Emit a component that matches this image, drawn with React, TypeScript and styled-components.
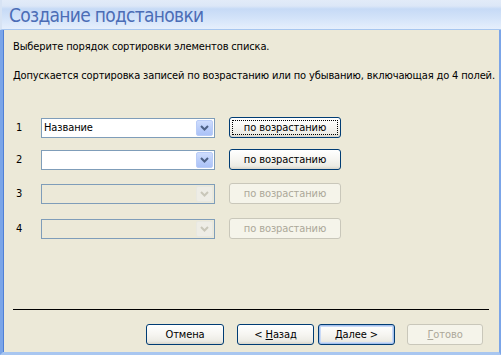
import React from "react";
import styled, { createGlobalStyle } from "styled-components";

const Global = createGlobalStyle`
  html, body { margin: 0; padding: 0; background: #ECE9D8; }
  body { font-family: "DejaVu Sans Condensed", "DejaVu Sans", sans-serif; }
`;

const Window = styled.div`
  width: 501px;
  height: 355px;
  display: flex;
  flex-direction: column;
  overflow: hidden;
  box-sizing: border-box;
`;

const Header = styled.div`
  height: 30px;
  flex: none;
  box-sizing: border-box;
  background: linear-gradient(to bottom, #E2EBF8 0px, #DCE7F7 6px, #C6DAF6 9px, #D3E3F9 18px, #E6EFFC 29px);
  border-bottom: 1px solid #A7C6EF;
  border-left: 2px solid #D7E3F4;
  display: flex;
  align-items: center;
  padding-left: 7px;
`;

const Title = styled.div`
  font-family: "DejaVu Sans Condensed", "DejaVu Sans", sans-serif;
  font-size: 19px;
  color: #4B6DB6;
  line-height: 24px;
  margin-top: 1px;
  letter-spacing: -0.7px;
`;

const Body = styled.div`
  flex: 1;
  display: flex;
  flex-direction: column;
  background: #ECE9D8;
  border-left: 3px solid #7BA5E8;
  border-right: 2px solid #7BA5E8;
  border-bottom: 3px solid #A8C6F0;
  box-shadow: inset 1px 0 0 #4F80D6;
  padding: 0 0 0 10px;
`;

const Text = styled.div<{ $mt: number }>`
  font-size: 11px;
  line-height: 14px;
  color: #000;
  margin-top: ${(p) => p.$mt}px;
  white-space: nowrap;
  letter-spacing: -0.14px;
`;

const Rows = styled.div`
  display: flex;
  flex-direction: column;
  margin-top: 34px;
`;

const Row = styled.div<{ $mt: number }>`
  display: flex;
  align-items: center;
  height: 21px;
  margin-top: ${(p) => p.$mt}px;
`;

const Num = styled.div`
  width: 28px;
  padding-left: 3px;
  box-sizing: border-box;
  font-size: 11px;
  color: #000;
`;

const Combo = styled.div<{ $disabled?: boolean }>`
  width: 174px;
  height: 20px;
  box-sizing: border-box;
  border: 1px solid #7F9DB9;
  background: ${(p) => (p.$disabled ? "#ECE9D8" : "#fff")};
  display: flex;
  align-items: center;
  justify-content: space-between;
  padding: 1px;
  font-size: 11px;
`;

const ComboText = styled.span`
  padding-left: 1px;
  color: #000;
  letter-spacing: -0.1px;
`;

const DropBtn = styled.div<{ $disabled?: boolean }>`
  width: 17px;
  height: 16px;
  box-sizing: border-box;
  border-radius: 2px;
  border: 1px solid ${(p) => (p.$disabled ? "#E8E8E1" : "#B9CCF7")};
  background: ${(p) =>
    p.$disabled
      ? "#EEEDE6"
      : "linear-gradient(to bottom, #CFDDFD 0%, #B9CDFA 55%, #ABC2F7 100%)"};
  display: flex;
  align-items: center;
  justify-content: center;
`;

const Btn = styled.div<{ $disabled?: boolean; $focus?: boolean; $default?: boolean; $w: number }>`
  width: ${(p) => p.$w}px;
  height: 21px;
  box-sizing: border-box;
  border-radius: 3px;
  border: 1px solid ${(p) => (p.$disabled ? "#C9C7BA" : "#003C74")};
  background: ${(p) =>
    p.$disabled
      ? "#F5F4EA"
      : "linear-gradient(to bottom, #FFFFFF 0%, #F6F5F1 50%, #ECEBE4 85%, #D8D5CA 100%)"};
  box-shadow: ${(p) =>
    p.$default ? "inset 0 0 0 1px #A6C1EC, inset 0 0 0 2px #C9DAF7" : "none"};
  color: ${(p) => (p.$disabled ? "#ACA899" : "#000")};
  font-size: 11px;
  letter-spacing: -0.1px;
  display: flex;
  align-items: center;
  justify-content: center;
  position: relative;
  &::after {
    content: "";
    display: ${(p) => (p.$focus ? "block" : "none")};
    position: absolute;
    inset: 2px;
    border: 1px dotted #000;
  }
`;

const SortBtn = styled(Btn)`
  margin-left: 14px;
`;

const Spacer = styled.div`
  flex: 1;
`;

const Separator = styled.div`
  height: 1px;
  background: #000;
  margin-left: 0px;
  margin-right: 10px;
`;

const Footer = styled.div`
  display: flex;
  align-items: center;
  margin: 14px 0 7px 133px;
`;

const FooterBtn = styled(Btn)<{ $ml: number }>`
  margin-left: ${(p) => p.$ml}px;
`;

const U = styled.span`
  text-decoration: underline;
`;

const Chevron = ({ disabled }: { disabled?: boolean }) => (
  <svg width="9" height="6" viewBox="0 0 9 6">
    <path
      d="M1 1 L4.5 4.5 L8 1"
      fill="none"
      stroke={disabled ? "#C9C7BA" : "#4D6185"}
      strokeWidth="2"
    />
  </svg>
);

const rows = [
  { n: "1", mt: 0, value: "Название", disabled: false, focus: true },
  { n: "2", mt: 11, value: "", disabled: false, focus: false },
  { n: "3", mt: 13, value: "", disabled: true, focus: false },
  { n: "4", mt: 14, value: "", disabled: true, focus: false },
];

export default function App() {
  return (
    <>
      <Global />
      <Window>
        <Header>
          <Title>Создание подстановки</Title>
        </Header>
        <Body>
          <Text $mt={10}>Выберите порядок сортировки элементов списка.</Text>
          <Text $mt={15}>
            Допускается сортировка записей по возрастанию или по убыванию, включающая до 4 полей.
          </Text>
          <Rows>
            {rows.map((r) => (
              <Row key={r.n} $mt={r.mt}>
                <Num>{r.n}</Num>
                <Combo $disabled={r.disabled}>
                  <ComboText>{r.value}</ComboText>
                  <DropBtn $disabled={r.disabled}>
                    <Chevron disabled={r.disabled} />
                  </DropBtn>
                </Combo>
                <SortBtn $w={112} $disabled={r.disabled} $focus={r.focus}>
                  по возрастанию
                </SortBtn>
              </Row>
            ))}
          </Rows>
          <Spacer />
          <Separator />
          <Footer>
            <FooterBtn $w={78} $ml={0}>Отмена</FooterBtn>
            <FooterBtn $w={77} $ml={13}>
              &lt;&nbsp;<U>Н</U>азад
            </FooterBtn>
            <FooterBtn $w={77} $ml={4} $default>
              <U>Д</U>алее &gt;
            </FooterBtn>
            <FooterBtn $w={76} $ml={12} $disabled>
              <U>Г</U>отово
            </FooterBtn>
          </Footer>
        </Body>
      </Window>
    </>
  );
}
